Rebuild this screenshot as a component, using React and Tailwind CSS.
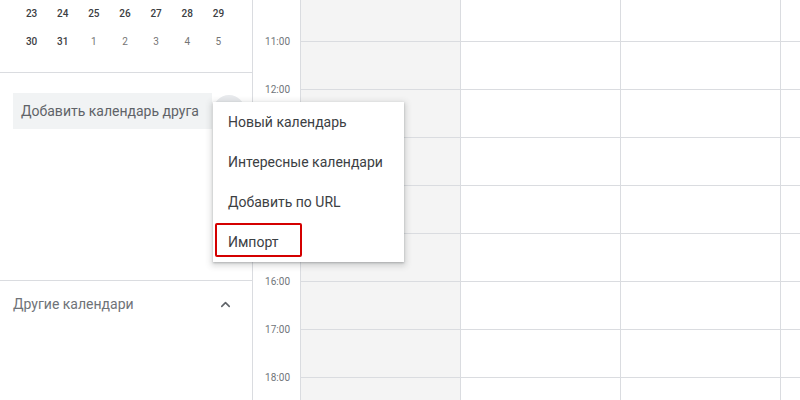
import { ChevronUp } from 'lucide-react';

const weeks = [
    [
        { d: 23 }, { d: 24 }, { d: 25 }, { d: 26 }, { d: 27 }, { d: 28 }, { d: 29 },
    ],
    [
        { d: 30 }, { d: 31 }, { d: 1, next: true }, { d: 2, next: true },
        { d: 3, next: true }, { d: 4, next: true }, { d: 5, next: true },
    ],
];

const hours = ['11:00', '12:00', '13:00', '14:00', '15:00', '16:00', '17:00', '18:00'];

const menuItems = ['Новый календарь', 'Интересные календари', 'Добавить по URL', 'Импорт'];

function MiniMonth() {
    return (
        <div className="border-b border-[#dadce0] pb-[17px]">
            <div className="-mt-px ml-[16px] grid w-[218px] grid-cols-7">
                {weeks.flat().map((day, i) => (
                    <div
                        key={i}
                        className={`flex h-[28px] items-center justify-center text-[10px] ${day.next ? 'font-normal text-[#757575]' : 'font-medium text-[#3c4043]'}`}
                    >
                        {day.d}
                    </div>
                ))}
            </div>
        </div>
    );
}

function AddMenu() {
    return (
        <div className="absolute left-[213px] top-[102px] z-10 w-[191px] bg-white shadow-[0_2px_6px_2px_rgba(60,64,67,0.18),0_1px_2px_rgba(60,64,67,0.3)]">
            {menuItems.map((label, i) => (
                <div key={label} className="relative flex h-[40px] items-center pl-[15px] text-[14px] text-[#3c4043]">
                    {label}
                    {i === menuItems.length - 1 && (
                        // outline around the import item
                        <span className="absolute left-[2px] top-px h-[34px] w-[87px] rounded-[2px] border-2 border-[#d40000]" />
                    )}
                </div>
            ))}
        </div>
    );
}

function Sidebar() {
    return (
        <div className="relative h-full w-[253px] shrink-0 border-r border-[#dadce0]">
            <MiniMonth />
            <div className="h-[208px] border-b border-[#dadce0] pt-[20px]">
                <div className="flex items-center">
                    <div className="ml-[13px] flex h-[36px] w-[199px] items-center bg-[#f1f3f4] pl-[8px] text-[14px] text-[#5f6368]">
                        Добавить календарь друга
                    </div>
                    <div className="ml-px h-[32px] w-[32px] rounded-full bg-[#e8eaed]" />
                </div>
            </div>
            <div className="flex h-[46px] items-center justify-between pl-[13px] pr-[19px]">
                <span className="text-[14px] text-[#6f7378]">Другие календари</span>
                <ChevronUp size={15} strokeWidth={2.5} className="text-[#5f6368]" />
            </div>
            <AddMenu />
        </div>
    );
}

function TimeGutter() {
    return (
        <div className="h-full w-[47px] shrink-0 pt-[17px]">
            {hours.map(h => (
                <div key={h} className="flex h-[48px] items-center justify-end pr-[10px] text-[10px] text-[#70757a]">
                    {h}
                </div>
            ))}
        </div>
    );
}

function DayGrid() {
    const rows = Array.from({ length: 9 });
    return (
        <div className="flex h-full flex-1 overflow-hidden border-l border-[#dadce0]">
            {[0, 1, 2, 3].map(col => (
                <div
                    key={col}
                    className={`-mt-[6px] w-[160px] shrink-0 border-r border-[#dadce0] ${col === 0 ? 'bg-[#f4f4f4]' : 'bg-white'}`}
                >
                    {rows.map((_, i) => (
                        <div key={i} className="h-[48px] border-b border-[#dadce0]" />
                    ))}
                </div>
            ))}
        </div>
    );
}

export default function App() {
    return (
        <div
            className="flex h-[400px] w-[800px] overflow-hidden bg-white"
            style={{ fontFamily: 'Roboto, "Noto Sans", Arial, sans-serif' }}
        >
            <Sidebar />
            <TimeGutter />
            <DayGrid />
        </div>
    );
}
